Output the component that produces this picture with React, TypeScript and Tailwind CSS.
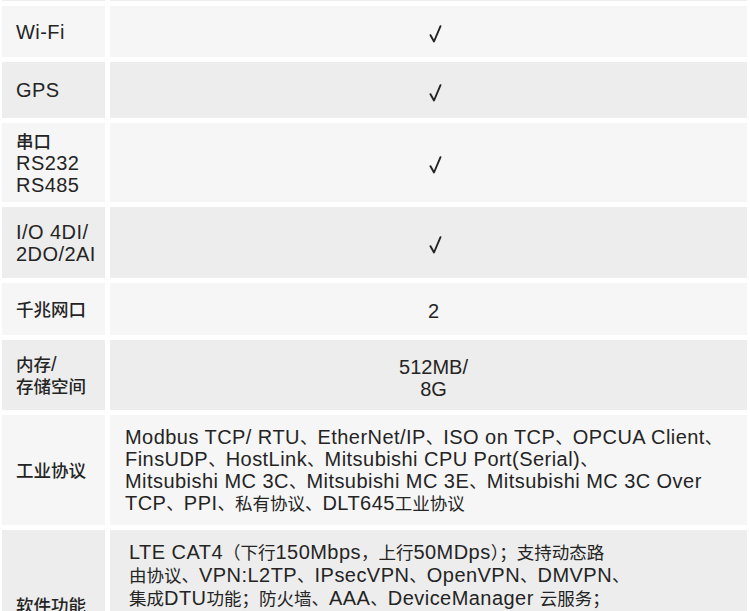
import React from "react";

const font = {
  fontFamily: '"Liberation Sans", "Noto Sans CJK SC", sans-serif',
};

const CJK = /([\u3000-\u303f\u4e00-\u9fff\uff00-\uffef]+)/;

function T({ s, bold }: { s: string; bold?: boolean }) {
  const parts = s.split(CJK).filter((p) => p.length > 0);
  return (
    <>
      {parts.map((p, i) =>
        CJK.test(p) ? (
          <span
            key={i}
            className={
              bold
                ? "text-[17.5px] font-medium leading-none tracking-normal"
                : "text-[17.5px] font-normal leading-none tracking-normal"
            }
          >
            {p}
          </span>
        ) : (
          <span key={i} className="text-[20px] leading-none tracking-[0.45px]">
            {p}
          </span>
        )
      )}
    </>
  );
}

function Lines({ lines, lh, bold }: { lines: string[]; lh?: string; bold?: boolean }) {
  return (
    <div>
      {lines.map((l, i) => (
        <div key={i} className={`flex items-center pt-[4px] ${lh ?? "h-[22px]"}`}>
          <div className="whitespace-nowrap">
            <T s={l} bold={bold} />
          </div>
        </div>
      ))}
    </div>
  );
}

type RowProps = {
  h: string;
  dark?: boolean;
  label?: string[];
  children?: React.ReactNode;
  rightClass?: string;
};

function Row({ h, dark, label, children, rightClass }: RowProps) {
  const bg = dark ? "bg-[#ededed]" : "bg-[#f6f6f6]";
  return (
    <div className={`flex gap-[5px] ${h}`}>
      <div
        className={`ml-[2px] w-[103px] shrink-0 ${bg} flex items-center pl-[14px] text-[#242424]`}
      >
        {label ? <Lines lines={label} bold /> : null}
      </div>
      <div
        className={`mr-[3px] flex-1 ${bg} text-[#242424] ${
          rightClass ?? "flex items-center justify-center pl-[10px]"
        }`}
      >
        {children}
      </div>
    </div>
  );
}

const Check = () => (
  <svg width="13" height="18" viewBox="0 0 13 18" className="block ml-[4px] mt-[5px]">
    <path
      d="M1.5 10.2 L5 16.5 L11.5 1.2"
      fill="none"
      stroke="#242424"
      strokeWidth="1.9"
      strokeLinecap="round"
      strokeLinejoin="round"
    />
  </svg>
);

export default function App() {
  return (
    <div className="w-[750px] h-[611px] overflow-hidden bg-white" style={font}>
      <div className="flex flex-col gap-[5px]">
        <Row h="h-[1px]" dark />
        <Row h="h-[51px]" label={["Wi-Fi"]}>
          <Check />
        </Row>
        <Row h="h-[56px]" dark label={["GPS"]}>
          <Check />
        </Row>
        <Row h="h-[79px]" label={["串口", "RS232", "RS485"]}>
          <Check />
        </Row>
        <Row h="h-[71px]" dark label={["I/O 4DI/", "2DO/2AI"]}>
          <Check />
        </Row>
        <Row h="h-[52px]" label={["千兆网口"]}>
          <span className="text-[20px] mt-[4px]">2</span>
        </Row>
        <Row h="h-[70px]" dark label={["内存/", "存储空间"]}>
          <div className="flex flex-col items-center mt-[5px]">
            <div className="text-[20px] leading-[22px]">512MB/</div>
            <div className="text-[20px] leading-[22px]">8G</div>
          </div>
        </Row>
        <Row
          h="h-[110px]"
          label={["工业协议"]}
          rightClass="flex items-center pl-[15px]"
        >
          <Lines
            lines={[
              "Modbus TCP/ RTU、EtherNet/IP、ISO on TCP、OPCUA Client、",
              "FinsUDP、HostLink、Mitsubishi CPU Port(Serial)、",
              "Mitsubishi MC 3C、Mitsubishi MC 3E、Mitsubishi MC 3C Over",
              "TCP、PPI、私有协议、DLT645工业协议",
            ]}
          />
        </Row>
        <Row
          h="h-[150px]"
          dark
          label={["软件功能"]}
          rightClass="pl-[19px] pt-[10px]"
        >
          <Lines
            lh="h-[23px]"
            lines={[
              "LTE CAT4（下行150Mbps，上行50MDps）；支持动态路",
              "由协议、VPN:L2TP、IPsecVPN、OpenVPN、DMVPN、",
              "集成DTU功能；防火墙、AAA、DeviceManager 云服务；",
              "支持Python二次开发、边缘计算、数据采集与转发；",
              "支持远程运维与固件升级",
            ]}
          />
        </Row>
      </div>
    </div>
  );
}
